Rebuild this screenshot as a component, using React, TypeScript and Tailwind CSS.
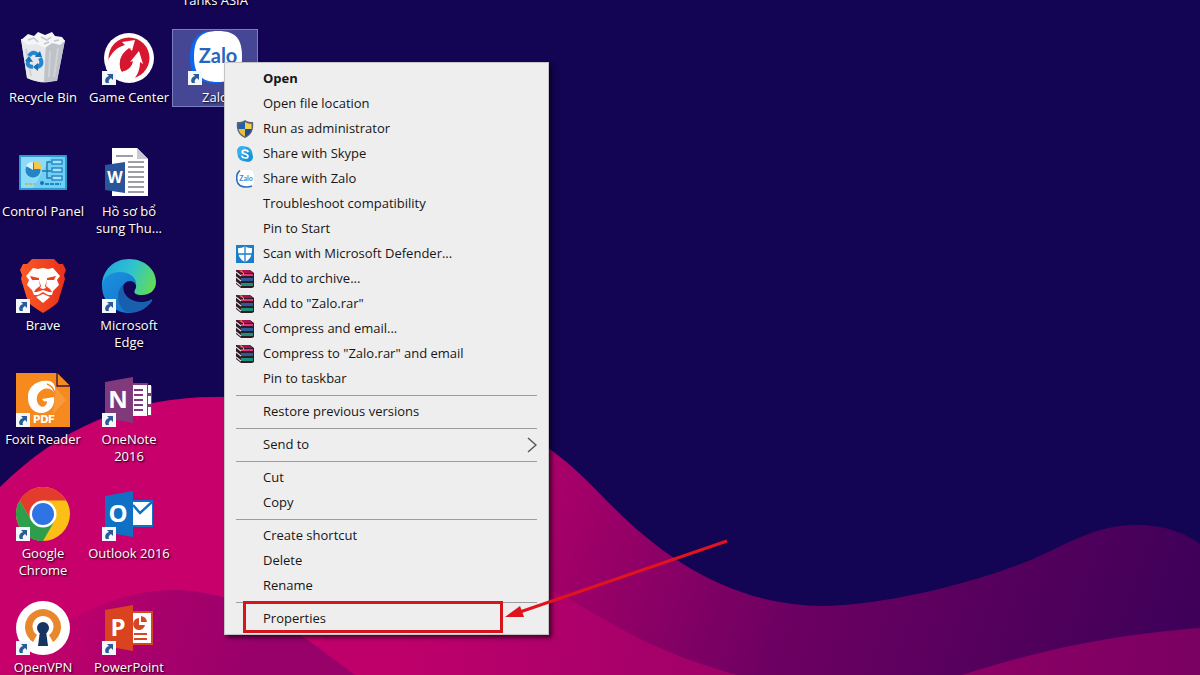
import { ReactNode, useState } from "react";
import clsx from "clsx";

type DesktopItem = {
  name: string;
  icon: ReactNode;
  column: string;
  shortcut?: boolean;
};

type MenuItem = {
  label: string;
  icon?: ReactNode;
  bold?: boolean;
  submenu?: boolean;
  marked?: boolean;
};

const RecycleBinIcon = () => (
  <svg viewBox="0 0 54 54" className="size-full">
    <path d="M5 8 L11 47 Q26 54 38 50 L41 50 L49 9 Z" fill="#d5d7dc" />
    <path d="M5 8 L11 47 Q20 51 28 51 L30 14 Z" fill="#e6e8eb" />
    <path d="M30 14 L28 51 L41 50 L49 9 Z" fill="#bfc2c9" />
    <path
      d="M5 9 L12 3 L18 5 L22 1 L29 4 L36 1 L39 5 L46 6 L49 10 L44 14 L36 12 L29 17 L21 13 L12 14 Z"
      fill="#f4f5f6"
    />
    <path
      d="M12 9 L18 7 L22 11 M25 6 L31 9 L35 6 M38 10 L43 9 M28 13 L33 11"
      stroke="#c3c6cc"
      strokeWidth="1.5"
      fill="none"
    />
    <path d="M34 20 L33 46 M42 17 L38 46 M10 18 L15 45" stroke="#d0d2d8" strokeWidth="2" />
    <g fill="none" stroke="#2287cf" strokeWidth="4">
      <path d="M13 25 Q17 19 22 24" />
      <path d="M24 27 Q28 34 21 36" />
      <path d="M17 36 Q9 35 13 29" />
    </g>
    <path d="M19 26 L26 26 L24 20 Z M22 32 L22 40 L17 36 Z M9 30 L13 25 L17 31 Z" fill="#1670b8" />
  </svg>
);

const GameCenterIcon = () => (
  <svg viewBox="0 0 54 54" className="size-full">
    <circle cx="27" cy="27" r="25" fill="#fff" />
    <circle cx="27" cy="27" r="20.5" fill="#d6172f" />
    <path
      d="M6 30 C9 22 15 16 23 14 L20 11 L33 9 L30 20 L27 17 C20 22 17 28 18 35 C19 42 22 46 26 49 L12 48 L4 38 Z"
      fill="#fff"
    />
    <path
      d="M19 40 C25 41 30 36 31 30 L28 31 L37 20 L41 33 L38 31 C38 38 36 44 31 49 L21 48 Z"
      fill="#fff"
    />
    <path d="M18 36 C17 28 21 22 29 17 C25 24 25 31 26 36 L20 41 Z" fill="#d6172f" />
  </svg>
);

const ZaloIcon = () => (
  <svg viewBox="0 0 54 54" className="size-full">
    <path d="M20 0 C7 2 2 12 2 27 C2 43 9 52 27 52 L33 52 L20 30 Z" fill="#0b67f2" />
    <path
      d="M30 0 C12 0 6 8 6 26 C6 43 13 51 30 51 C48 51 54 43 54 26 C54 8 48 0 30 0 Z"
      fill="#fff"
    />
    <text
      x="30"
      y="32"
      textAnchor="middle"
      fontSize="20"
      fontWeight="700"
      fill="#2466bf"
      fontFamily="Lato, sans-serif"
    >
      Zalo
    </text>
  </svg>
);

const ControlPanelIcon = () => (
  <svg viewBox="0 0 54 54" className="size-full">
    <rect x="3" y="10" width="48" height="35" rx="1" fill="#2d9bd3" />
    <rect x="5" y="12" width="44" height="31" fill="#6fd0f3" />
    <path d="M5 12 L35 12 L17 43 L5 43 Z" fill="#8cdcf7" />
    <circle cx="17" cy="25" r="7.5" fill="#2684c4" />
    <path d="M18 24 L18 16 A8 8 0 0 1 26 24 Z" fill="#f5c84a" />
    <path d="M17 25 L10 21 A8 8 0 0 1 17 17 Z" fill="#d7f2fb" />
    <path d="M26 26 H31 V17 H35 M31 26 H35 M31 26 V33 H35" stroke="#2275ae" fill="none" strokeWidth="1.4" />
    <g fill="#a5e4fa" stroke="#2684c4" strokeWidth="1.4">
      <rect x="36" y="15" width="10" height="4" />
      <rect x="36" y="23" width="10" height="4" />
      <rect x="36" y="31" width="10" height="4" />
    </g>
    <path d="M9 39 H21" stroke="#c8b75e" strokeWidth="2" strokeDasharray="3 1" />
    <path d="M29 39 H45" stroke="#2684c4" strokeWidth="2" strokeDasharray="4 1" />
    <circle cx="26" cy="38" r="2" fill="#1b6fb0" />
  </svg>
);

const WordDocIcon = () => (
  <svg viewBox="0 0 54 54" className="size-full">
    <path d="M10 3 H35 L46 14 V51 H10 Z" fill="#fff" />
    <path d="M35 3 L46 14 H35 Z" fill="#c9c9cf" />
    <path
      d="M14 11 H31 M26 17 H42 M26 22 H42 M26 27 H42 M26 32 H42 M26 37 H42 M26 42 H42 M26 47 H42"
      stroke="#7e8088"
      strokeWidth="1.6"
    />
    <path d="M3 20 L23 17 V48 L3 45 Z" fill="#2a5699" />
    <text
      x="13"
      y="38"
      textAnchor="middle"
      fontSize="16"
      fontWeight="700"
      fill="#fff"
      fontFamily="'Open Sans', sans-serif"
    >
      W
    </text>
  </svg>
);

const BraveIcon = () => (
  <svg viewBox="0 0 54 54" className="size-full">
    <defs>
      <linearGradient id="brave" x1="0" x2="1">
        <stop offset="0" stopColor="#fb5a25" />
        <stop offset="1" stopColor="#e8301c" />
      </linearGradient>
    </defs>
    <path
      d="M16 0 H38 L43 5 L47 5 L50 11 L48 16 L49 20 L42 43 Q40 46 27 54 Q14 46 12 43 L5 20 L6 16 L4 11 L7 5 L11 5 Z"
      fill="url(#brave)"
    />
    <path
      d="M17 9 L22 10 L27 9 L32 10 L37 9 L44 17 L41 21 L43 26 L37 32 L36 36 L32 36 L27 33 L22 36 L18 36 L16 31 L11 26 L13 21 L10 17 Z"
      fill="#fff"
    />
    <path
      d="M14 17 L23 19 L23 21 L16 21 Z M40 17 L31 19 L31 21 L38 21 Z M23 21 L24 27 L20 30 L18 33 L21 33 L27 31 L33 33 L36 33 L34 30 L30 27 L31 21 L29 27 L30 29 L27 30 L24 29 L25 27 Z"
      fill="#ef4320"
    />
    <path d="M20 38 L27 35 L34 38 L27 44 Z" fill="#fff" />
  </svg>
);

const EdgeIcon = () => (
  <svg viewBox="0 0 54 54" className="size-full">
    <defs>
      <linearGradient id="edgeTop" x1="0" y1="0.3" x2="1" y2="0.6">
        <stop offset="0" stopColor="#22a5dc" />
        <stop offset="0.5" stopColor="#2fc3cf" />
        <stop offset="1" stopColor="#62dc56" />
      </linearGradient>
      <linearGradient id="edgeLeft" x1="0" y1="0" x2="0.6" y2="1">
        <stop offset="0" stopColor="#1c92de" />
        <stop offset="1" stopColor="#1476cf" />
      </linearGradient>
    </defs>
    <path
      d="M0 27 C0 11 12 0 27 0 C43 0 54 11 54 23 C54 32 47 36 40 36 C34 36 31 34 33 31 C37 24 30 18 24 19 Z"
      fill="url(#edgeTop)"
    />
    <path
      d="M0 27 C1 18 9 13 18 13 C28 13 35 19 34 26 C32 21 26 21 23 24 C16 30 19 42 30 49 L30 54 C13 55 0 43 0 27 Z"
      fill="url(#edgeLeft)"
    />
    <path
      d="M23 24 C14 30 13 45 24 53 C34 56 45 50 50 42 C51 40 49 40 48 41 C38 46 25 41 22 33 C21 29 21 26 23 24 Z"
      fill="#1a5fae"
    />
  </svg>
);

const FoxitIcon = () => (
  <svg viewBox="0 0 54 54" className="size-full">
    <path d="M0 0 H41 L54 13 V54 H0 Z" fill="#f68a1e" />
    <path d="M41 0 V13 H54" fill="#f68a1e" stroke="#3a1440" strokeWidth="1.4" />
    <path d="M40 15 L50 27 L37 41 Z" fill="#f99a3a" />
    <path
      d="M34 8 C20 6 11 15 12 25 C12 35 19 41 27 40 C36 38 39 31 38 24 L26 26 C27 28 29 29 31 28 C31 33 27 35 24 33 C19 29 20 20 26 17 C31 14 36 16 39 20 C40 13 38 10 34 8 Z"
      fill="#fff"
    />
    <path d="M31 11 Q37 13 39 20" stroke="#f68a1e" fill="none" strokeWidth="1.4" />
    <text
      x="28"
      y="50"
      textAnchor="middle"
      fontSize="11"
      fontWeight="800"
      fill="#fff"
      fontFamily="Inter, sans-serif"
    >
      PDF
    </text>
  </svg>
);

const OfficeCover = ({ color, letter }: { color: string; letter: string }) => (
  <>
    <path d="M3 9 L31 4 V50 L3 45 Z" fill={color} />
    <text
      x="16"
      y="35"
      textAnchor="middle"
      fontSize="24"
      fontWeight="700"
      fill="#fff"
      fontFamily="'Open Sans', sans-serif"
    >
      {letter}
    </text>
  </>
);

const OneNoteIcon = () => (
  <svg viewBox="0 0 54 54" className="size-full">
    <path d="M30 10 H46 V13 H50 V43 H30 Z" fill="#80397b" />
    <path d="M31 12 H45 V43 H31 Z" fill="#fff" />
    <path d="M46 12 H49 V20 H46 Z M46 23 H49 V31 H46 Z M46 34 H49 V42 H46 Z" fill="#fff" />
    <path d="M32 17 H41 M32 22 H41 M32 27 H41 M32 32 H41 M32 37 H41" stroke="#80397b" strokeWidth="2" />
    <OfficeCover color="#80397b" letter="N" />
  </svg>
);

const OutlookIcon = () => (
  <svg viewBox="0 0 54 54" className="size-full">
    <path d="M30 13 H51 V40 H30 Z" fill="#0f70c4" />
    <path d="M31 15 H50 V38 H31 Z" fill="#fff" />
    <path d="M31 18 L38 26 L50 15" stroke="#0f70c4" strokeWidth="2.4" fill="none" />
    <OfficeCover color="#0f70c4" letter="O" />
  </svg>
);

const PowerPointIcon = () => (
  <svg viewBox="0 0 54 54" className="size-full">
    <path d="M30 10 H51 V44 H30 Z" fill="#d24726" />
    <path d="M31 12 H49 V42 H31 Z" fill="#fff" />
    <path d="M37 17 A6 6 0 1 0 43 24 H37 Z" fill="#d24726" />
    <path d="M39 15 A7 7 0 0 1 45 21 H39 Z" fill="#d24726" />
    <path d="M32 33 H45 M32 38 H45" stroke="#d24726" strokeWidth="2" />
    <OfficeCover color="#d9431f" letter="P" />
  </svg>
);

const ChromeIcon = () => (
  <svg viewBox="0 0 54 54" className="size-full">
    <circle cx="27" cy="27" r="27" fill="#fbbf16" />
    <path d="M3.6 13.5 A27 27 0 0 1 50.4 13.5 L27 13.5 L15.3 33.7 Z" fill="#e33b2e" />
    <path d="M3.6 13.5 A27 27 0 0 0 27 54 L38.7 33.7 L15.3 33.7 Z" fill="#2f9e4c" />
    <circle cx="27" cy="27" r="13.5" fill="#fff" />
    <circle cx="27" cy="27" r="11" fill="#2f74e4" />
  </svg>
);

const OpenVpnIcon = () => (
  <svg viewBox="0 0 54 54" className="size-full">
    <circle cx="27" cy="27" r="27" fill="#fff" />
    <path
      d="M17 41 A18 18 0 1 1 37 41 L33 34 A10.5 10.5 0 1 0 21 34 Z"
      fill="#e8872b"
    />
    <circle cx="27" cy="27" r="6" fill="#17335f" />
    <path d="M24 30 H30 L32 45 H22 Z" fill="#17335f" />
  </svg>
);

const ShieldIcon = () => (
  <svg viewBox="0 0 18 18" className="size-[18px]">
    <path d="M9 0 C6 2 4 2 1 2 C0 9 2 15 9 18 C16 15 18 9 17 2 C14 2 12 2 9 0 Z" fill="#5b6470" />
    <path d="M9 2 C7 3 5 4 2.5 3.8 V9 H9 Z" fill="#1f5fae" />
    <path d="M9 2 C11 3 13 4 15.5 3.8 V9 H9 Z" fill="#f3d04e" />
    <path d="M2.5 9 H9 V16.5 C5 15 3 12 2.5 9 Z" fill="#e9bf3a" />
    <path d="M15.5 9 H9 V16.5 C13 15 15 12 15.5 9 Z" fill="#1b4f98" />
  </svg>
);

const SkypeIcon = () => (
  <svg viewBox="0 0 18 18" className="size-[18px]">
    <circle cx="9" cy="9" r="7.5" fill="#29a3e2" />
    <circle cx="6" cy="6" r="5" fill="#35b0ea" />
    <circle cx="12" cy="12" r="5" fill="#1c93d8" />
    <path
      d="M12 6.5 C11 4.5 6.3 4.5 6.3 7 C6.3 9.5 12 8.5 12 11.2 C12 13.5 7 13.5 6 11.3"
      stroke="#fff"
      strokeWidth="1.7"
      fill="none"
      strokeLinecap="round"
    />
  </svg>
);

const ZaloSmallIcon = () => (
  <svg viewBox="0 0 18 18" className="size-[18px]">
    <rect x="2" y="0" width="16" height="17" rx="5" fill="#fff" />
    <path d="M4 0.5 C-0.5 4 -0.5 12 4 15.5 C7 17.5 13 17.5 16 16" stroke="#2a6fc2" strokeWidth="1.6" fill="none" />
    <text
      x="10"
      y="11"
      textAnchor="middle"
      fontSize="7"
      fontWeight="700"
      fill="#4a86cc"
      fontFamily="Lato, sans-serif"
    >
      Zalo
    </text>
  </svg>
);

const DefenderIcon = () => (
  <svg viewBox="0 0 18 18" className="size-[18px]">
    <rect width="18" height="18" fill="#1a7fcb" />
    <path d="M9 1 C7 3 4 3 2 3 C2 10 3 14 9 17 C15 14 16 10 16 3 C14 3 11 3 9 1 Z" fill="#fff" />
    <path d="M9 1 V17 M1 9 H17" stroke="#1a7fcb" strokeWidth="1.3" />
  </svg>
);

const WinRarIcon = () => (
  <svg viewBox="0 0 18 18" className="size-[18px]">
    <path d="M0 0 H14 L18 3 V17 L16 18 H5 L0 14 Z" fill="#2b1c26" />
    <path d="M1 0 H13 L17 3 H5 Z" fill="#a8124f" />
    <path d="M5 4 H17 V6 H5 Z" fill="#e0347c" />
    <path d="M5 8 H17 V11 H5 Z" fill="#2c5a9c" />
    <path d="M5 13 H17 V16 H5 Z" fill="#1d9077" />
    <path d="M0 2 L5 6 M0 7 L5 11 M0 12 L5 16" stroke="#e6dfe2" strokeWidth="1.2" />
    <path d="M5 0 L8 3 V5 H7 V3 L4 1 Z" fill="#e2a13a" />
  </svg>
);

const ShortcutArrow = () => (
  <svg viewBox="0 0 14 14" className="absolute bottom-0 left-0 size-[14px]">
    <rect width="14" height="14" fill="#f3f6fa" />
    <path d="M4 12 C2 9 4 6 7 5 L5 3 H11 V9 L9 7 C7 8 6 10 7 12 Z" fill="#2a5a98" />
  </svg>
);

const desktopItems: DesktopItem[] = [
  { name: "World of Tanks ASIA", icon: null, column: "col-start-3" },
  { name: "Recycle Bin", icon: <RecycleBinIcon />, column: "col-start-1" },
  { name: "Game Center", icon: <GameCenterIcon />, column: "col-start-2", shortcut: true },
  { name: "Zalo", icon: <ZaloIcon />, column: "col-start-3", shortcut: true },
  { name: "Control Panel", icon: <ControlPanelIcon />, column: "col-start-1" },
  { name: "Hồ sơ bổ sung Thu...", icon: <WordDocIcon />, column: "col-start-2" },
  { name: "Brave", icon: <BraveIcon />, column: "col-start-1", shortcut: true },
  { name: "Microsoft Edge", icon: <EdgeIcon />, column: "col-start-2", shortcut: true },
  { name: "Foxit Reader", icon: <FoxitIcon />, column: "col-start-1", shortcut: true },
  { name: "OneNote 2016", icon: <OneNoteIcon />, column: "col-start-2", shortcut: true },
  { name: "Google Chrome", icon: <ChromeIcon />, column: "col-start-1", shortcut: true },
  { name: "Outlook 2016", icon: <OutlookIcon />, column: "col-start-2", shortcut: true },
  { name: "OpenVPN", icon: <OpenVpnIcon />, column: "col-start-1", shortcut: true },
  { name: "PowerPoint", icon: <PowerPointIcon />, column: "col-start-2", shortcut: true },
];

const menuGroups: MenuItem[][] = [
  [
    { label: "Open", bold: true },
    { label: "Open file location" },
    { label: "Run as administrator", icon: <ShieldIcon /> },
    { label: "Share with Skype", icon: <SkypeIcon /> },
    { label: "Share with Zalo", icon: <ZaloSmallIcon /> },
    { label: "Troubleshoot compatibility" },
    { label: "Pin to Start" },
    { label: "Scan with Microsoft Defender...", icon: <DefenderIcon /> },
    { label: "Add to archive...", icon: <WinRarIcon /> },
    { label: 'Add to "Zalo.rar"', icon: <WinRarIcon /> },
    { label: "Compress and email...", icon: <WinRarIcon /> },
    { label: 'Compress to "Zalo.rar" and email', icon: <WinRarIcon /> },
    { label: "Pin to taskbar" },
  ],
  [{ label: "Restore previous versions" }],
  [{ label: "Send to", submenu: true }],
  [{ label: "Cut" }, { label: "Copy" }],
  [{ label: "Create shortcut" }, { label: "Delete" }, { label: "Rename" }],
  [{ label: "Properties", marked: true }],
];

function Wallpaper() {
  return (
    <svg
      viewBox="0 0 1200 675"
      preserveAspectRatio="xMidYMid slice"
      className="absolute inset-0 size-full"
      aria-hidden="true"
    >
      <defs>
        <linearGradient id="back" gradientUnits="userSpaceOnUse" x1="420" y1="400" x2="1200" y2="660">
          <stop offset="0" stopColor="#c7006b" />
          <stop offset="0.2" stopColor="#a60069" />
          <stop offset="0.5" stopColor="#6e0062" />
          <stop offset="0.8" stopColor="#50005c" />
          <stop offset="1" stopColor="#3c0059" />
        </linearGradient>
        <linearGradient id="front" gradientUnits="userSpaceOnUse" x1="400" y1="600" x2="1200" y2="675">
          <stop offset="0" stopColor="#bf006b" />
          <stop offset="0.3" stopColor="#a8006a" />
          <stop offset="1" stopColor="#7a0062" />
        </linearGradient>
        <linearGradient id="hill" gradientUnits="userSpaceOnUse" x1="50" y1="600" x2="260" y2="660">
          <stop offset="0" stopColor="#c4006b" />
          <stop offset="0.5" stopColor="#a8006c" />
          <stop offset="1" stopColor="#98006a" />
        </linearGradient>
      </defs>
      <rect width="1200" height="675" fill="#130454" />
      <path
        d="M0 487 C60 428 130 397 215 397 C350 395 480 400 551 450 C578 470 590 484 609 503 C660 555 730 606 824 606 C890 604 970 584 1031 560 C1070 543 1095 525 1137 525 C1165 525 1185 533 1200 544 V675 H0 Z"
        fill="url(#back)"
      />
      <path
        d="M300 675 C360 560 500 560 567 598 C620 628 650 650 737 675 Z M962 675 C1040 650 1110 635 1200 628 V675 Z"
        fill="url(#front)"
      />
      <path d="M0 675 C50 625 110 590 175 590 C250 592 300 634 355 675 Z" fill="url(#hill)" />
    </svg>
  );
}

function DesktopTile({
  item,
  selected,
  onSelect,
}: {
  item: DesktopItem;
  selected: boolean;
  onSelect: () => void;
}) {
  return (
    <div className={clsx("h-[114px]", item.column)}>
      <button
        type="button"
        onClick={onSelect}
        className={clsx(
          "flex w-full flex-col items-center gap-1 border pt-px",
          selected ? "border-[#7a80bd] bg-[#454794]" : "border-transparent"
        )}
      >
        <span className="relative block size-[54px]">
          {item.icon}
          {item.shortcut && <ShortcutArrow />}
        </span>
        <span className="block w-[84px] text-center text-[13px] leading-[17px] text-white [text-shadow:1px_1px_2px_#000]">
          {item.name}
        </span>
      </button>
    </div>
  );
}

function ContextMenu() {
  return (
    <div
      role="menu"
      className="absolute left-[224px] top-[62px] w-[325px] border border-[#c4c4c8] bg-[#eeeeee] py-[3px] shadow-[3px_3px_4px_rgba(0,0,0,0.55)]"
    >
      {menuGroups.map((group, groupIndex) => (
        <div key={groupIndex}>
          {groupIndex > 0 && (
            <div className="flex h-2 items-center px-[11px]">
              <hr className="w-full border-[#9d9d9d]" />
            </div>
          )}
          {group.map((item) => (
            <button
              key={item.label}
              type="button"
              role="menuitem"
              className="relative flex h-[25px] w-full items-center gap-[9px] px-[11px] text-left text-[13px] text-[#161616] hover:bg-white"
            >
              <span className="size-[18px] shrink-0">{item.icon}</span>
              <span className={clsx("grow whitespace-nowrap", item.bold && "font-bold")}>
                {item.label}
              </span>
              {item.submenu && (
                <svg viewBox="0 0 10 16" className="h-4 w-[10px]" fill="none">
                  <path d="M1 1 L9 8 L1 15" stroke="#555" strokeWidth="1.4" />
                </svg>
              )}
              {item.marked && (
                <span className="absolute -bottom-[2px] -top-[5px] left-[18px] w-[260px] border-[3px] border-[#d4161c]" />
              )}
            </button>
          ))}
        </div>
      ))}
    </div>
  );
}

export default function App() {
  const [selected, setSelected] = useState<string>("Zalo");

  return (
    <main className="relative h-screen overflow-hidden bg-[#130454] font-['Open_Sans','Noto_Sans',sans-serif]">
      <Wallpaper />
      {/* the first row is scrolled half out of view */}
      <div className="relative -mt-[85px] grid w-max grid-cols-[repeat(3,86px)]">
        {desktopItems.map((item) => (
          <DesktopTile
            key={item.name}
            item={item}
            selected={selected === item.name}
            onSelect={() => setSelected(item.name)}
          />
        ))}
      </div>
      <ContextMenu />
      <svg
        viewBox="0 0 224 80"
        className="pointer-events-none absolute left-[505px] top-[539px] h-20 w-56"
        aria-hidden="true"
      >
        <path d="M222 2 L12 74" stroke="#e0141f" strokeWidth="3" />
        <path d="M0 78 L15 67 L19 78 Z" fill="#e0141f" />
      </svg>
    </main>
  );
}
